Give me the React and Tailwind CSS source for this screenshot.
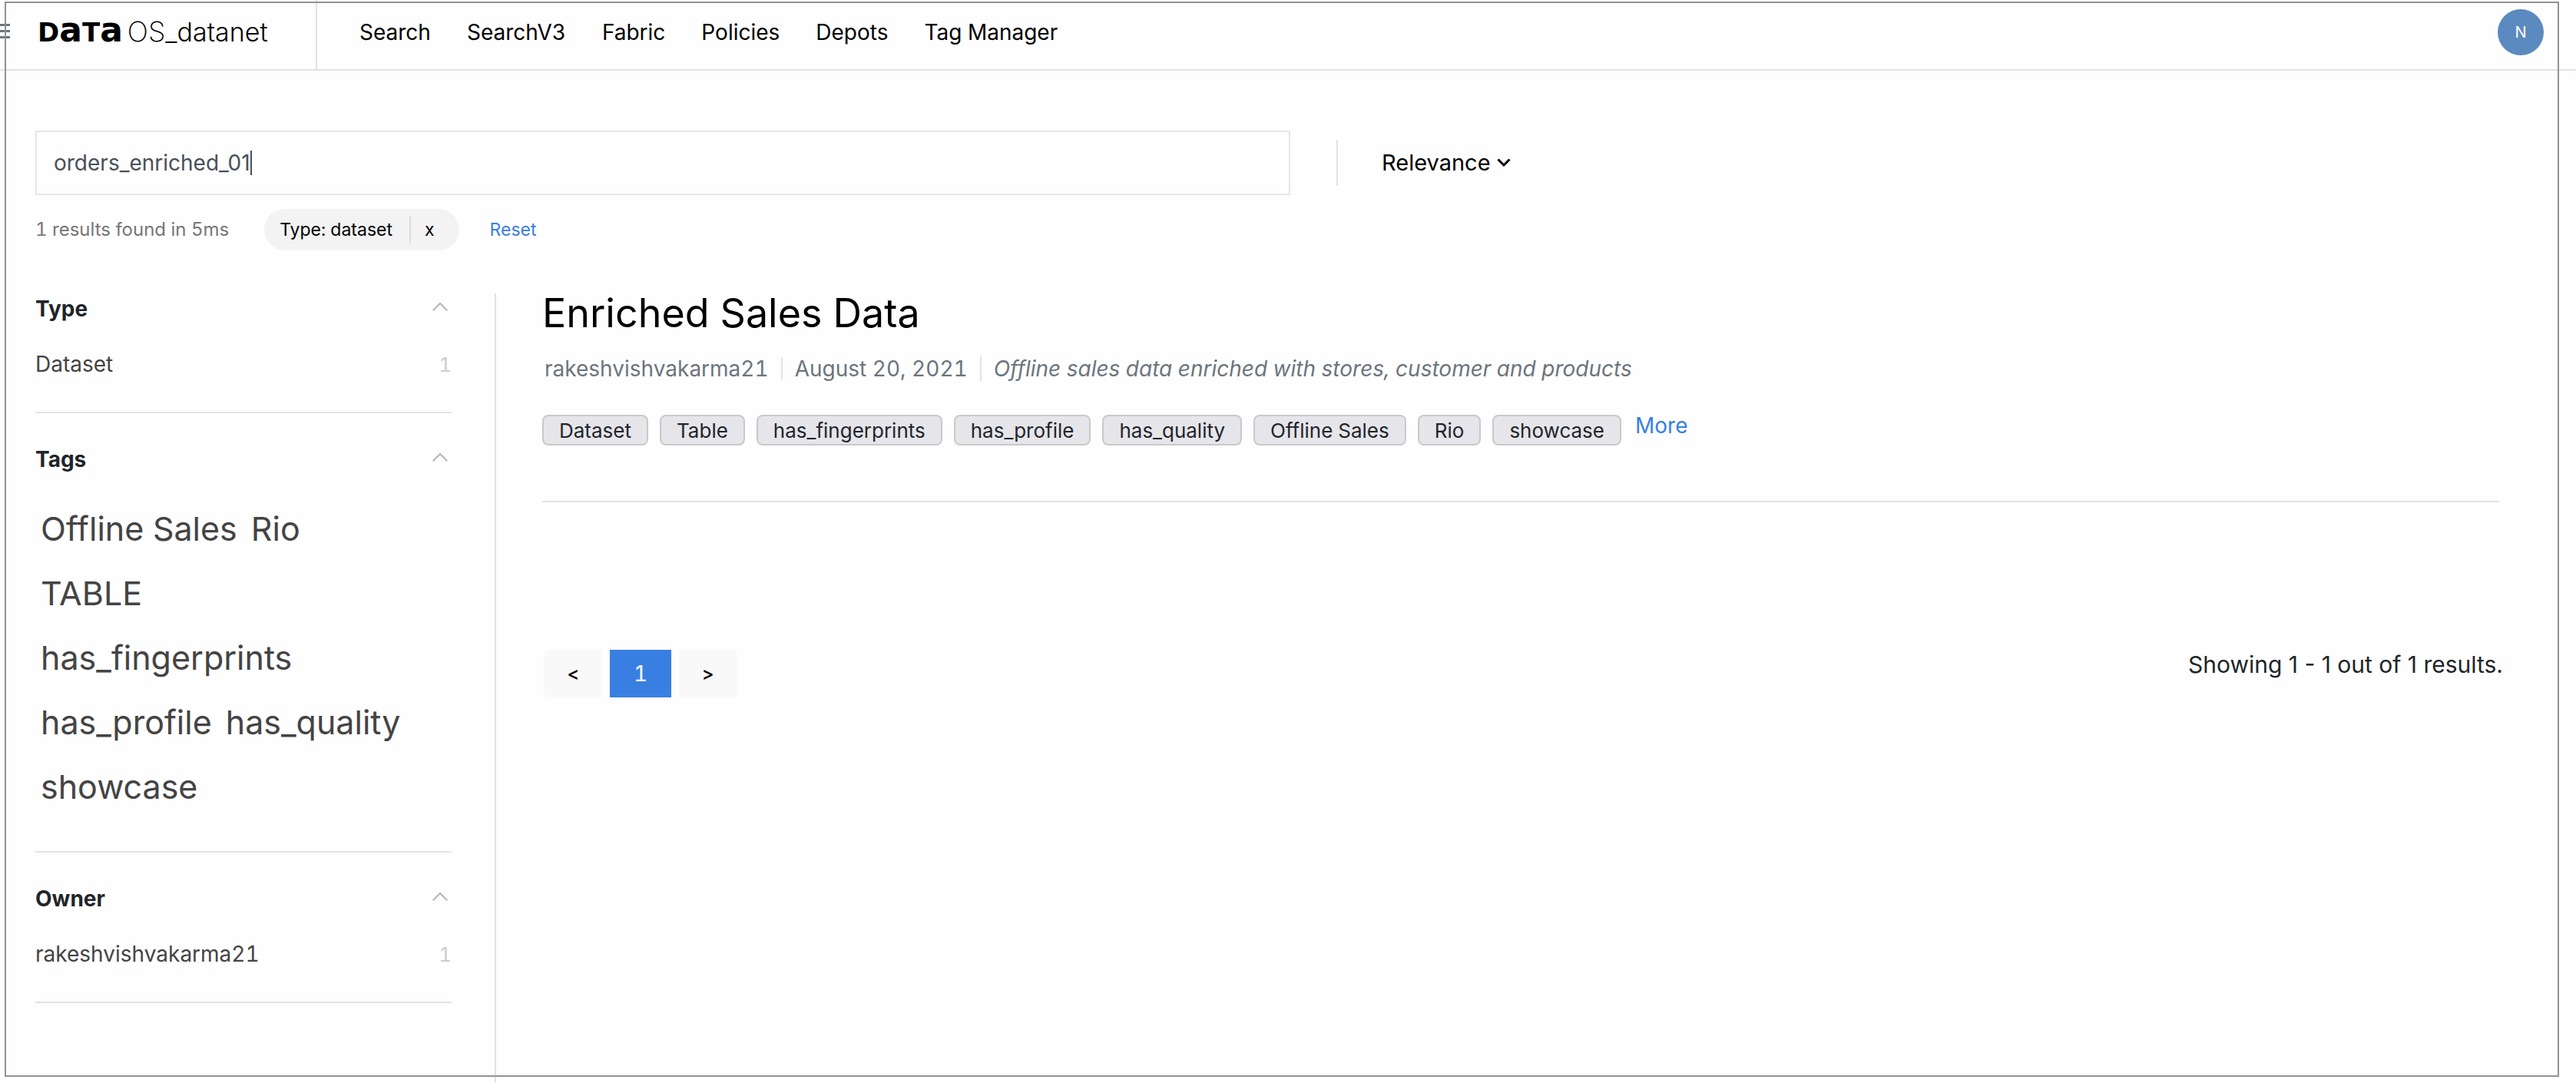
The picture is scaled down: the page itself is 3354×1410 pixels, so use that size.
import React, { useState } from "react";

const navItems = ["Search", "SearchV3", "Fabric", "Policies", "Depots", "Tag Manager"];
const tags = ["Offline Sales", "Rio", "TABLE", "has_fingerprints", "has_profile", "has_quality", "showcase"];
const chips = ["Dataset", "Table", "has_fingerprints", "has_profile", "has_quality", "Offline Sales", "Rio", "showcase"];

function Header() {
  return (
    <header className="flex h-[92px] items-start border-b-2 border-[#dee2e6]">
      <button type="button" aria-label="Open menu" className="flex h-20 w-[13px] flex-col justify-center gap-[5px]">
        <span className="h-[3px] bg-[#6c757d]" />
        <span className="h-[3px] bg-[#6c757d]" />
        <span className="h-[3px] bg-[#6c757d]" />
      </button>
      <a href="#home" className="flex h-20 w-[398px] items-center pl-9 text-[34px] leading-10 text-black">
        <span className="flex items-baseline">
          <span className="font-['DejaVu_Sans',sans-serif] font-bold">
            D<span className="text-[44px]">a</span>T<span className="text-[44px]">a</span>
          </span>
          <span className="pl-1.5 text-[36px] font-extralight">OS</span>
          <span className="font-light">_datanet</span>
        </span>
      </a>
      <div className="w-0.5 self-stretch bg-[#dee2e6]" />
      <nav className="flex h-[84px] flex-1 items-center gap-[47px] pl-[55px] text-[28px] text-black">
        {navItems.map((item) => (
          <a key={item} href={`#${item}`}>{item}</a>
        ))}
      </nav>
      <div className="flex h-[84px] items-center pr-[42px]">
        <button type="button" aria-label="Account" className="flex size-[60px] items-center justify-center rounded-full bg-[#5a8abf] text-xl text-white">
          N
        </button>
      </div>
    </header>
  );
}

function SearchBar() {
  const [query, setQuery] = useState("orders_enriched_01");
  return (
    <div className="flex items-center">
      <div className="flex h-[84px] w-1/2 items-center border-2 border-[#e6e6e6] pl-[22px]">
        <input
          type="text"
          aria-label="Search datasets"
          value={query}
          onChange={(e) => setQuery(e.target.value)}
          className="field-sizing-content h-10 text-[28px] text-[#495057] caret-transparent outline-none proportional-nums"
        />
        <span className="h-8 w-0.5 bg-[#495057]" />
      </div>
      <div className="ml-[60px] h-[60px] w-0.5 bg-[#e1e1e8]" />
      <div className="ml-[57px] flex items-center gap-2">
        <select aria-label="Sort by" className="field-sizing-content appearance-none bg-transparent text-[29px] text-black outline-none">
          <option>Relevance</option>
        </select>
        <svg width="18" height="12" viewBox="0 0 18 12" fill="none" stroke="black" strokeWidth="3" aria-hidden="true">
          <path d="M1.500 1.500 9 9l7.500-7.500" />
        </svg>
      </div>
    </div>
  );
}

function ActiveFilters() {
  return (
    <div className="mt-[18px] flex h-[54px] items-center">
      <p className="text-2xl text-[#777777]">1 results found in 5ms</p>
      <div className="ml-[46px] flex h-[54px] items-center rounded-full bg-[#f3f3f3] pl-5 pr-8 text-[23px] text-black">
        <span>Type: dataset</span>
        <span className="ml-[22px] h-9 w-0.5 bg-[#dddddd]" />
        <button type="button" aria-label="Remove filter" className="ml-[18px]">x</button>
      </div>
      <a href="#reset" className="ml-10 text-[23px] text-[#397fe1]">Reset</a>
    </div>
  );
}

function FacetTitle({ children }) {
  return (
    <button type="button" className="flex h-10 w-full items-center justify-between pr-[5px] text-[28px] font-bold text-[#212529]">
      {children}
      <svg className="mb-1.5" width="20" height="12" viewBox="0 0 20 12" fill="none" stroke="#b5b5b5" strokeWidth="2" aria-hidden="true">
        <path d="M.7 11.300 10 2l9.300 9.300" />
      </svg>
    </button>
  );
}

function FacetRow({ label, count }) {
  return (
    <a href={`#${label}`} className="mt-8 flex h-10 items-center justify-between text-[28px] text-[#444444]">
      {label}
      <span className="text-[26px] text-[#cccccc]">{count}</span>
    </a>
  );
}

function Sidebar() {
  return (
    <aside className="flex w-[600px] shrink-0 flex-col gap-10 border-r-2 border-[#e1e1e5] pr-14">
      <section className="border-b-2 border-[#e3e3e3] pb-[42px]">
        <FacetTitle>Type</FacetTitle>
        <FacetRow label="Dataset" count={1} />
      </section>
      <section className="border-b-2 border-[#e3e3e3] pb-[42px]">
        <FacetTitle>Tags</FacetTitle>
        <div className="mt-7 flex flex-wrap gap-x-[18px] pl-[7px] pr-[62px] text-[43px] leading-[84px] text-[#444444]">
          {tags.map((tag) => (
            <a key={tag} href={`#${tag}`}>{tag}</a>
          ))}
        </div>
      </section>
      <section className="border-b-2 border-[#e3e3e3] pb-[42px]">
        <FacetTitle>Owner</FacetTitle>
        <FacetRow label="rakeshvishvakarma21" count={1} />
      </section>
    </aside>
  );
}

function Result() {
  return (
    <article className="mr-[60px] border-b-2 border-[#e3e3e3] pb-[72px]">
      <h1 className="text-[52px] leading-[52px] text-black">
        <a href="#dataset">Enriched Sales Data</a>
      </h1>
      <div className="mt-[26px] flex h-10 items-center gap-4 pl-[3px] text-[28px] text-[#6c757d]">
        <span>rakeshvishvakarma21</span>
        <span className="h-7 w-0.5 bg-[#dee2e6]" />
        <span>August 20, 2021</span>
        <span className="h-8 w-0.5 bg-[#dee2e6]" />
        <em className="[font-feature-settings:'cv11']">Offline sales data enriched with stores, customer and products</em>
      </div>
      <div className="mt-10 flex items-start gap-[15px]">
        {chips.map((chip) => (
          <span key={chip} className="flex h-10 items-center rounded-lg border-2 border-[#c9c9c9] bg-[#e6e5ea] px-5 text-[26px] text-[#212529]">
            {chip}
          </span>
        ))}
        <a href="#more" className="pl-[3px] text-[28px] leading-7 text-[#397fe1]">More</a>
      </div>
    </article>
  );
}

function Pager() {
  return (
    <div className="mt-48 mr-[55px] flex items-start justify-between">
      <div className="flex h-[62px] gap-2.5 pl-0.5 font-medium text-black">
        <button type="button" aria-label="Previous page" className="w-[76px] rounded-l-lg bg-[#f9f9f9] text-2xl">&lt;</button>
        <button type="button" aria-current="page" className="w-20 bg-[#397fe1] text-[28px] font-normal text-white">1</button>
        <button type="button" aria-label="Next page" className="w-[76px] rounded-r-lg bg-[#f9f9f9] text-2xl">&gt;</button>
      </div>
      <p className="text-[30px] leading-[38px] text-[#212529] proportional-nums">Showing 1 - 1 out of 1 results.</p>
    </div>
  );
}

export default function App() {
  return (
    <div className="relative flex min-h-screen flex-col bg-[#fefefe] font-['Inter',sans-serif] tabular-nums">
      <Header />
      <div className="flex flex-1 flex-col pt-[78px] pr-10 pl-[46px]">
        <SearchBar />
        <ActiveFilters />
        <div className="mt-14 flex flex-1">
          <Sidebar />
          <main className="flex-1 pl-[60px]">
            <Result />
            <Pager />
          </main>
        </div>
      </div>
      <div className="pointer-events-none absolute top-0.5 right-[22px] bottom-2 left-1.5 border-2 border-[#929292]" />
    </div>
  );
}
